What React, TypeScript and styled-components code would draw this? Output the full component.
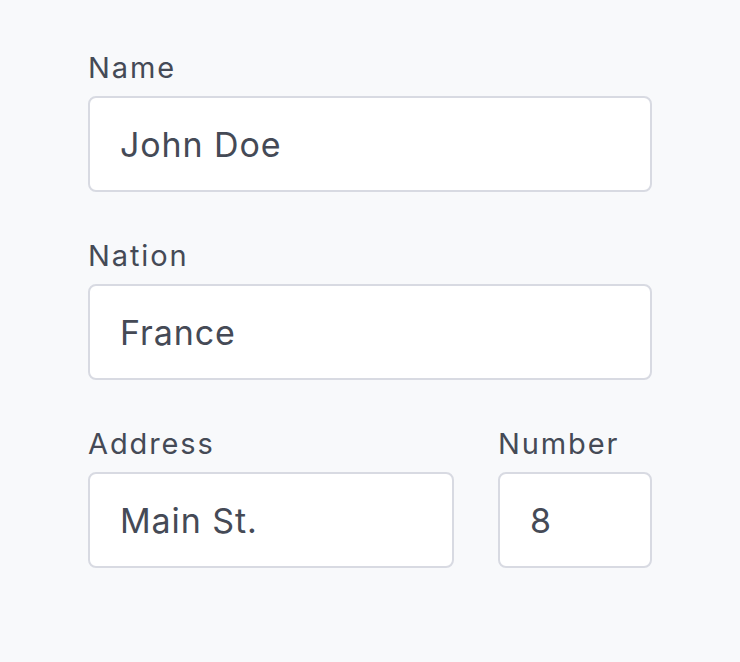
import React from "react";
import styled, { createGlobalStyle } from "styled-components";

const Global = createGlobalStyle`
  html, body { margin: 0; padding: 0; background: #f8f9fb; }
  body { font-family: Inter, "Noto Sans", sans-serif; }
`;

const Page = styled.div`
  width: 740px;
  height: 662px;
  box-sizing: border-box;
  padding: 48px 88px 0 88px;
  background: #f8f9fb;
`;

const Form = styled.form`
  display: flex;
  flex-direction: column;
  gap: 44px;
  width: 564px;
`;

const Row = styled.div`
  display: flex;
  gap: 44px;
`;

const Field = styled.label<{ $grow?: boolean; $width?: number }>`
  display: flex;
  flex-direction: column;
  gap: 8px;
  flex: ${(p) => (p.$grow ? "1 1 0" : `0 0 ${p.$width}px`)};
  min-width: 0;
`;

const Label = styled.span`
  font-size: 29px;
  line-height: 40px;
  color: #454a56;
  letter-spacing: 1.9px;
`;

const Input = styled.input`
  box-sizing: border-box;
  width: 100%;
  height: 96px;
  padding: 0 30px;
  border: 2px solid #d8dae2;
  border-radius: 8px;
  background: #ffffff;
  font-family: Inter, "Noto Sans", sans-serif;
  font-size: 34px;
  letter-spacing: 0.9px;
  color: #454a56;
  outline: none;
`;

export default function App() {
  return (
    <Page>
      <Global />
      <Form>
        <Field $grow>
          <Label>Name</Label>
          <Input defaultValue="John Doe" />
        </Field>
        <Field $grow>
          <Label>Nation</Label>
          <Input defaultValue="France" />
        </Field>
        <Row>
          <Field $grow>
            <Label>Address</Label>
            <Input defaultValue="Main St." />
          </Field>
          <Field $width={154}>
            <Label>Number</Label>
            <Input defaultValue="8" />
          </Field>
        </Row>
      </Form>
    </Page>
  );
}
